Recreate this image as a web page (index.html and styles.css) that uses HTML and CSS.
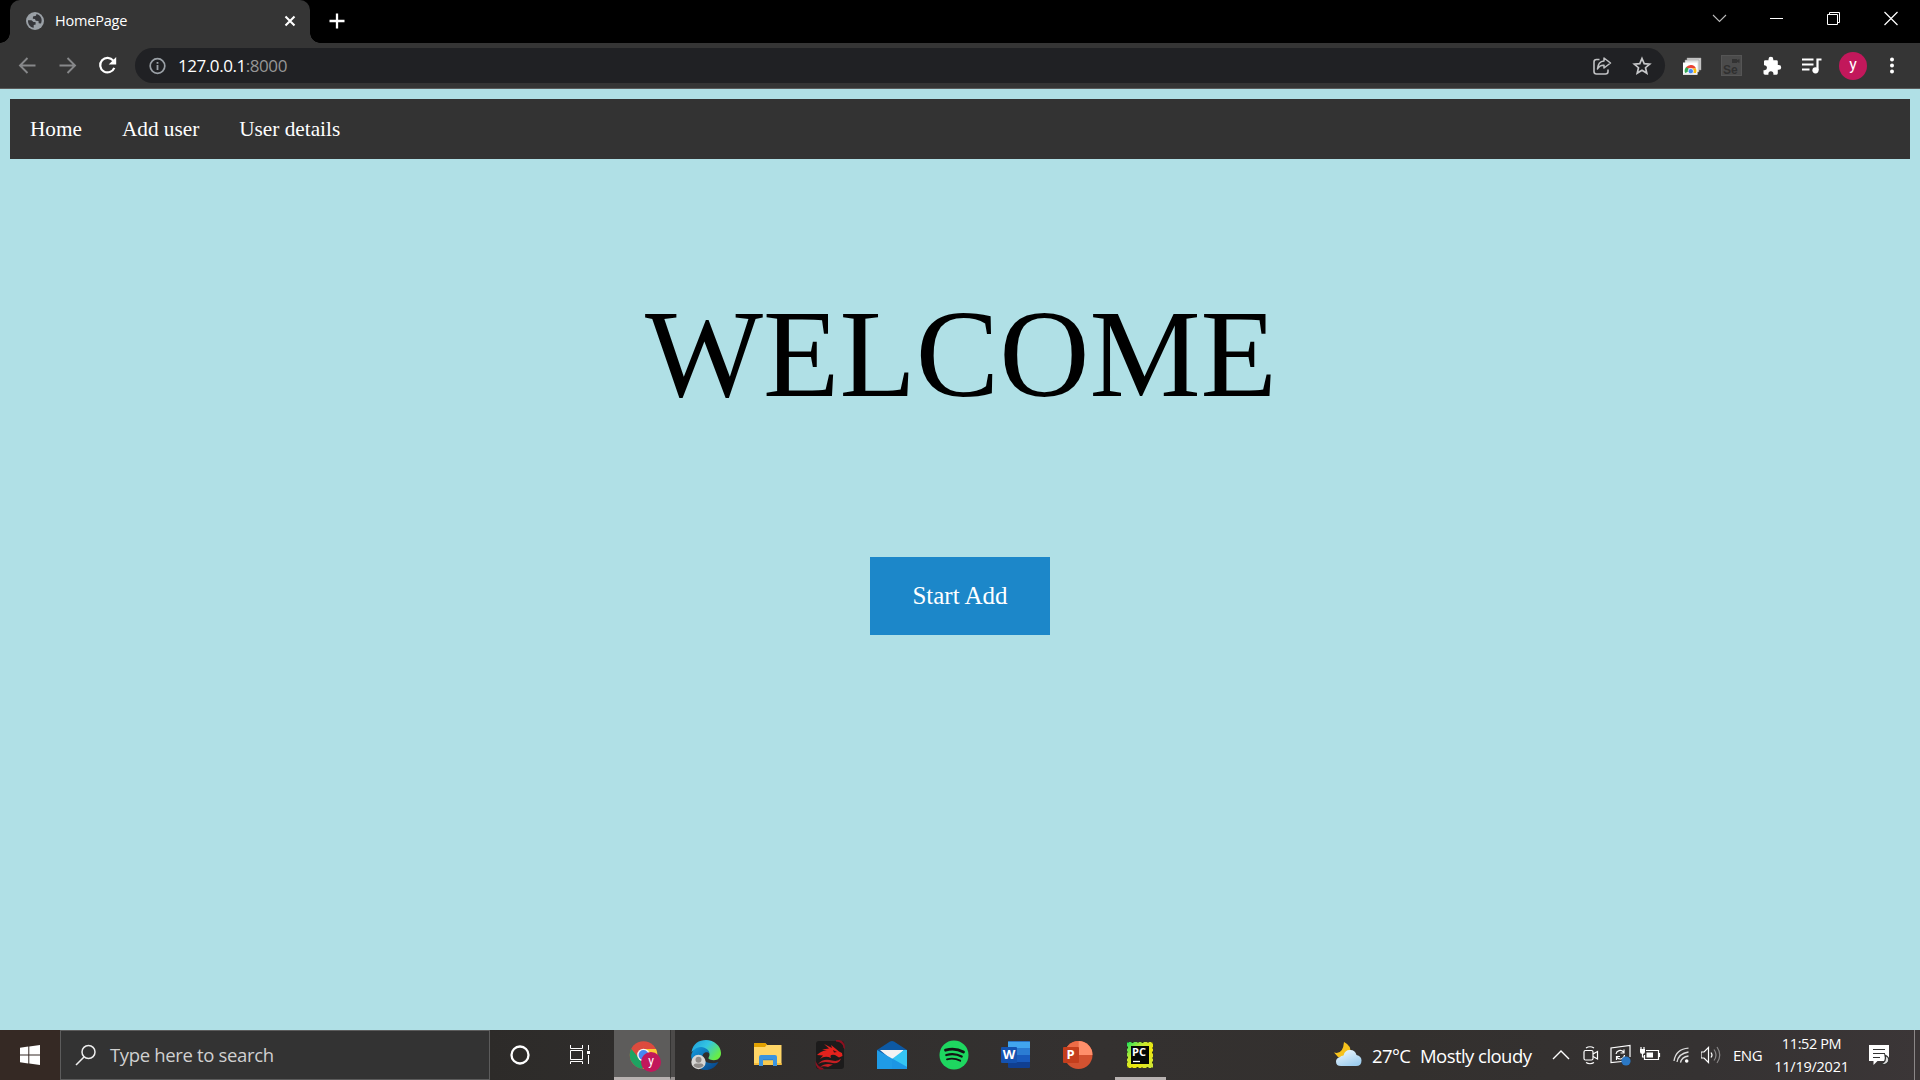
FILE: index.html
```html
<!DOCTYPE html>
<html lang="en">
<head>
<meta charset="utf-8">
<title>HomePage</title>
<link rel="stylesheet" href="styles.css">
</head>
<body>
<div class="screen">
  <header class="tabstrip">
    <div class="tab">
      <svg class="globe" width="18" height="18" viewBox="0 0 18 18"><circle cx="9" cy="9" r="9" fill="#9aa0a6"/><path d="M2 8.200 H5.500 L7.500 10 H9.500 L9.700 12.500 L7.700 13 V15.800 C4 15.500 1.800 12 2 8.200Z M10.500 2 L10 3.800 L7 4.500 L6.800 6.700 L9 7 L9.700 8.700 L12.500 9 L12.700 11.200 L15 11.400 C17 7 14.500 3 10.500 2Z" fill="#35363a"/></svg>
      <span class="tab-title">HomePage</span>
      <svg class="tab-close" width="12" height="12" viewBox="0 0 12 12"><path d="M1.500 1.500 L10.500 10.500 M10.500 1.500 L1.500 10.500" stroke="#fff" stroke-width="2.100"/></svg>
    </div>
    <svg class="new-tab" width="16" height="16" viewBox="0 0 16 16"><path d="M8 .5 V15.500 M.5 8 H15.500" stroke="#fff" stroke-width="2.300"/></svg>
    <div class="window-buttons">
      <svg width="57" height="30" viewBox="0 0 57 30"><path d="M22 15 L28.500 21.500 L35 15" fill="none" stroke="#bbb" stroke-width="1.100"/></svg>
      <svg width="57" height="30" viewBox="0 0 57 30"><path d="M22 18.500 H35" stroke="#fff"/></svg>
      <svg width="57" height="30" viewBox="0 0 57 30"><path d="M22.500 14.500 H32.500 V24.500 H22.500Z M24.500 14.500 V12.500 H34.500 V22.500 H32.500" fill="none" stroke="#fff"/></svg>
      <svg width="58" height="30" viewBox="0 0 58 30"><path d="M22.500 12 L35.500 25 M35.500 12 L22.500 25" stroke="#fff" stroke-width="1.200"/></svg>
    </div>
  </header>

  <div class="toolbar">
    <svg class="nav-icon" width="20" height="20" viewBox="0 0 20 20"><path d="M18.500 9.500 H3.500 M10.500 2 L3 9.500 L10.500 17" fill="none" stroke="#87888a" stroke-width="1.900"/></svg>
    <svg class="nav-icon" width="20" height="20" viewBox="0 0 20 20"><path d="M2.500 9.500 H17.500 M10.500 2 L18 9.500 L10.500 17" fill="none" stroke="#87888a" stroke-width="1.900"/></svg>
    <svg class="nav-icon" width="20" height="20" viewBox="0 0 20 20"><path d="M16.300 4.700 A7.300 7.300 0 1 0 17.300 11.800" fill="none" stroke="#fff" stroke-width="2.200"/><path d="M19.200 1 V8.500 H11.700Z" fill="#fff"/></svg>
    <div class="omnibox">
      <svg class="info" width="18" height="18" viewBox="0 0 18 18"><circle cx="9.500" cy="9" r="7.300" fill="none" stroke="#9aa0a6" stroke-width="1.700"/><path d="M9.500 8 V13 M9.500 5 V6.700" stroke="#9aa0a6" stroke-width="1.800"/></svg>
      <span class="url">127.0.0.1<span class="port">:8000</span></span>
      <svg class="share" width="20" height="20" viewBox="0 0 20 20"><path d="M7.500 3.500 H4.500 Q2 3.500 2 6 V15.500 Q2 18 4.500 18 H13.500 Q16 18 16 15.500 V13.500" fill="none" stroke="#c0c1c3" stroke-width="1.600"/><path d="M12 2 L18.500 7 L12 12 V9.200 Q7.500 9 5.500 13 Q6 5.500 12 5Z" fill="none" stroke="#c0c1c3" stroke-width="1.500" stroke-linejoin="round"/></svg>
      <svg class="star" width="20" height="20" viewBox="0 0 20 20"><path d="M10 2.500 L12.200 7.600 L17.700 8.100 L13.500 11.700 L14.800 17.100 L10 14.200 L5.200 17.100 L6.500 11.700 L2.300 8.100 L7.800 7.600Z" fill="none" stroke="#c6c7c9" stroke-width="1.700"/></svg>
    </div>
    <div class="extensions">
      <svg width="20" height="20" viewBox="0 0 20 20"><path d="M5 2 H19 V14 H5Z" fill="#d0d0d0" stroke="#999" stroke-width=".5"/><path d="M3 4 H17 V16 H3Z" fill="#e2e2e2" stroke="#888" stroke-width=".5"/><path d="M1 6.500 H15.500 V18 H1Z" fill="#fff"/><path d="M3 17 A5.700 5.700 0 0 1 5 10.500 L8.500 15Z" fill="#34a853"/><path d="M4 11.500 A5.700 5.700 0 0 1 14 12.500 H8Z" fill="#ea4335"/><path d="M9 12.500 H14 Q15 15 14 17 H9Z" fill="#fbbc05"/><circle cx="8.800" cy="15.200" r="2.700" fill="#4285f4" stroke="#fff" stroke-width=".8"/><path d="M1 17.500 H15.500 V19 H1Z" fill="#ddd"/></svg>
      <svg width="22" height="22" viewBox="0 0 22 22"><rect x=".5" y=".5" width="20" height="20" fill="#4b4b4b" stroke="#555"/><path d="M11 4 H16 V5 L18.500 4 V8 L16 7 V8 H11Z" fill="#333"/><text x="2" y="18.500" class="se-label">Se</text></svg>
      <svg width="20" height="20" viewBox="0 0 20 20"><path d="M2 5.500 Q2 4.300 3.200 4.300 H6.500 V3.200 A2.400 2.400 0 0 1 11.300 3.200 V4.300 H14.500 Q15.800 4.300 15.800 5.500 V9 H16.800 A2.300 2.300 0 0 1 16.800 13.800 H15.800 V17.300 Q15.800 18.700 14.500 18.700 H11.400 V17.700 A2.500 2.500 0 0 0 6.400 17.700 V18.700 H3 Q1.500 18.700 1.500 17.300 V14.200 H2.500 A2.500 2.500 0 0 0 2.500 9.200 H2Z" fill="#fff"/></svg>
      <svg width="22" height="20" viewBox="0 0 22 20"><path d="M1 3.500 H12.500 M1 8.500 H12.500 M1 13.500 H8.500" stroke="#fff" stroke-width="2"/><path d="M16.500 14 V3.500 H20.500" fill="none" stroke="#fff" stroke-width="2.200"/><circle cx="14.500" cy="14.300" r="3.100" fill="#fff"/></svg>
      <span class="avatar">y</span>
      <svg width="6" height="18" viewBox="0 0 6 18"><g fill="#fff"><circle cx="4" cy="2.500" r="2"/><circle cx="4" cy="8.500" r="2"/><circle cx="4" cy="14.500" r="2"/></g></svg>
    </div>
  </div>

  <main class="page">
    <nav class="navbar"><a>Home</a><a>Add user</a><a>User details</a></nav>
    <h1 class="welcome">WELCOME</h1>
    <a class="start">Start Add</a>
  </main>

  <footer class="taskbar">
    <div class="cell start-menu"><svg width="20" height="20" viewBox="0 0 20 20"><path d="M0 2.700 L8.300 1.500 V9.400 H0Z M9.300 1.400 L20 0 V9.400 H9.300Z M0 10.400 H8.300 V18.500 L0 17.300Z M9.300 10.400 H20 V20 L9.300 18.600Z" fill="#fff"/></svg></div>
    <div class="search">
      <svg width="22" height="22" viewBox="0 0 22 22"><circle cx="13.500" cy="8" r="6.500" fill="none" stroke="#eee" stroke-width="1.500"/><path d="M9 13 L1 21" stroke="#eee" stroke-width="1.600"/></svg>
      <span>Type here to search</span>
    </div>
    <div class="cell"><svg width="20" height="20" viewBox="0 0 20 20"><circle cx="10" cy="10" r="8.500" fill="none" stroke="#fff" stroke-width="2.300"/></svg></div>
    <div class="cell task-view"><svg width="20" height="20" viewBox="0 0 20 20"><path d="M.5 0 V3.500 H12.500 V0 M.5 5.500 H12.500 V14.500 H.5Z M.5 19 V16.500 H12.500 V19 M18.500 0 V5 M18.500 10 V19" fill="none" stroke="#fff"/><rect x="17" y="6" width="3" height="3" fill="#fff"/></svg></div>
    <div class="chrome-app"><div class="chrome-active">
      <svg width="32" height="32" viewBox="0 0 32 32"><circle cx="14.500" cy="15" r="13.800" fill="#dd4b3e"/><path d="M2.200 8.800 A13.800 13.800 0 0 0 13 28.700 L19 18 L9 17Z" fill="#1da362"/><path d="M14.500 9 H27 A13.800 13.800 0 0 1 14 28.800 L21 15Z" fill="#fcc934"/><circle cx="14.500" cy="15" r="6.300" fill="#f5f5f5"/><circle cx="14.500" cy="15" r="4.900" fill="#4688f1"/><circle cx="22" cy="22" r="10" fill="#c2185b"/><text x="22" y="25" class="badge-y">y</text></svg>
    </div><div class="chrome-stack"></div></div>
    <div class="app"><svg width="32" height="32" viewBox="0 0 32 32">
      <defs><linearGradient id="edge-top" x1="0" y1="0" x2="1" y2=".6"><stop offset="0" stop-color="#1d9cdc"/><stop offset=".5" stop-color="#34c5e2"/><stop offset="1" stop-color="#68ed45"/></linearGradient><linearGradient id="edge-low" x1="0" y1="0" x2="1" y2="1"><stop stop-color="#139cdf"/><stop offset="1" stop-color="#073f83"/></linearGradient></defs>
      <path d="M1.500 13 C3 4.500 9 1 16 1 C24 1 31 7 31 14 C31 20 26 22.500 20 20.500 C17 19.500 19.500 18 19.500 15.500 C19 10 11 6 1.500 13Z" fill="url(#edge-top)"/>
      <path d="M1.200 18 C1 12 6 8 11 8 C16 8 19.500 12 19.500 14.500 C17 11.500 12 14 12.500 18 C13 23 20 26 28.500 23 C25 29 20 31 16 31 C8 31 2 25 1.200 18Z" fill="url(#edge-low)"/>
      <circle cx="8.500" cy="23" r="7.200" fill="#d8d7d5"/><circle cx="8.500" cy="20.800" r="3" fill="#8f8b88"/><path d="M3.500 27 Q3.500 24.500 6 24.500 H11 Q13.500 24.500 13.500 27 Q8.500 31 3.500 27Z" fill="#8f8b88"/></svg></div>
    <div class="app"><svg width="30" height="30" viewBox="0 0 30 30"><path d="M1 5 Q1 3 2 3 H12 L14 5 H28.500 V25 H1Z" fill="#ffd667"/><path d="M1 4 Q1 3 2 3 H12 L14 4.500 L12 7 H1Z" fill="#e2a100"/><path d="M1 23 H28.500 V25 H1Z" fill="#f6bd3b"/><path d="M6 26 V17 Q6 15 8 15 H22 Q24 15 24 17 V26 H20 V20 H10 V26Z" fill="#3b94df"/><path d="M10 19.500 H20 V20.500 H10Z" fill="#2776bd"/><path d="M10 20.500 H20 V25 H10Z" fill="#f8c94f"/></svg></div>
    <div class="app"><svg width="30" height="30" viewBox="0 0 30 30"><path d="M20 1 H26 Q30 1 29.500 8 L24 9Z M1 21 L9 28 L6 30 Q0 29 1 21Z" fill="#780c1c"/><rect x="1" y="1" width="28" height="28" rx="3" fill="#1c1b1b"/><path d="M21 0 Q30 -1 30 9 L28.500 8 Q28 2 21 1.500Z M.5 21 Q0 30 9 29.500 L8 28 Q3 27 .5 21Z" fill="#8e1120"/><path d="M2 15 Q7 10 12 10.500 L7 9.500 L14 8.500 L9 4 L17 8 L16 5 L21 9 L24 11.500 L27 13 L27.500 16 L24 17.500 L20 15 Q14 14 16 18 Q10 15 5 19 L8 15.500Z" fill="#e3221d"/><path d="M3 24 Q8 18 17 20.500 Q23 22 26 18.500 Q24 25 15 22.500 Q8 21 3 24Z M5 27 Q10 22.500 18 24.500 L13 27 Q9 25.500 5 27Z" fill="#c51f22"/><path d="M18 10 L22 12 L19 12.500Z" fill="#3c1010"/></svg></div>
    <div class="app"><svg width="30" height="30" viewBox="0 0 30 30"><path d="M0 10 L13 1.500 Q15 .5 17 1.500 L30 10 L15 21Z" fill="#0c59a4"/><path d="M3 10 H27 L16 21Z" fill="#f3f3f3"/><path d="M15 19 L27 10 H30 V29 H27Z" fill="#35c5f3"/><path d="M0 10 L30 27 V29 H0Z" fill="#1f9be6"/><path d="M15 18.500 L30 27 V29 H15Z" fill="#168de0" opacity=".35"/></svg></div>
    <div class="app"><svg width="30" height="30" viewBox="0 0 30 30"><circle cx="15" cy="15" r="14.500" fill="#1ed760"/><g fill="none" stroke="#131313" stroke-linecap="round"><path d="M6.500 10.200 Q16 7.500 24.500 12" stroke-width="2.800"/><path d="M7.300 15 Q15.500 12.700 22.700 16.500" stroke-width="2.300"/><path d="M8 19.300 Q15 17.500 21.200 20.700" stroke-width="1.900"/></g></svg></div>
    <div class="app"><svg width="30" height="30" viewBox="0 0 30 30"><rect x="7" y="1" width="22" height="27" rx="1" fill="#103f91"/><path d="M7 1.500 H29 V8 H7Z" fill="#41a5ee"/><path d="M7 8 H29 V15 H7Z" fill="#2b7cd3"/><path d="M7 15 H29 V22 H7Z" fill="#185abd"/><rect x="0" y="7" width="16" height="16" rx="1" fill="#1452b0"/><text x="8" y="19.300" class="office">W</text></svg></div>
    <div class="app"><svg width="30" height="30" viewBox="0 0 30 30"><circle cx="15.500" cy="15" r="14" fill="#d35230"/><path d="M15.500 1 V15 H1.500 A14 14 0 0 1 15.500 1Z" fill="#ed6c47"/><path d="M15.500 1 A14 14 0 0 1 29.500 15 H15.500Z" fill="#ff8f6b"/><rect x="0" y="7" width="16" height="16" rx="1" fill="#c43e1c"/><text x="7.500" y="19.300" class="office">P</text></svg></div>
    <div class="app running"><svg width="28" height="28" viewBox="0 0 28 28"><defs><linearGradient id="py" x2="1" y2="1"><stop stop-color="#19e25d"/><stop offset=".35" stop-color="#c6e932"/><stop offset=".6" stop-color="#f0e70d"/><stop offset="1" stop-color="#c9e43d"/></linearGradient></defs><rect x="1" y="1" width="26" height="26" fill="url(#py)"/><rect x="1.500" y="1.500" width="25" height="25" fill="none" stroke="#151708" stroke-dasharray="1 3 2 4" opacity=".85"/><rect x="5" y="5" width="18" height="18" fill="#050805"/><text x="6" y="14.500" class="pc">PC</text><path d="M7 20.500 H14" stroke="#fff" stroke-width="1.300"/></svg></div>

    <div class="tray">
      <svg class="weather" width="30" height="28" viewBox="0 0 30 28"><defs><linearGradient id="cloud" x2=".6" y2="1"><stop stop-color="#f5fbff"/><stop offset="1" stop-color="#9fceef"/></linearGradient></defs><path d="M11 1 Q19 5 17 12 Q13 19 5 16 L1 11.500 Q10 14 11 1Z" fill="#f6c21c"/><path d="M8 25 Q3 25 3 20.500 Q3 17 7 16 Q8 14.500 10.500 14.500 Q12 8.500 17.500 9 Q22 9 23.500 14 Q28.500 15 28.500 19.500 Q28.500 25 23 25Z" fill="url(#cloud)"/></svg>
      <span class="temp">27°C</span><span class="cond">Mostly cloudy</span>
      <svg class="t-up" width="18" height="10" viewBox="0 0 18 10"><path d="M1 9 L9 1 L17 9" fill="none" stroke="#fff" stroke-width="1.400"/></svg>
      <svg class="t-cam" width="16" height="20" viewBox="0 0 16 20"><g fill="none" stroke="#fff" stroke-width="1.200"><rect x="1" y="5.500" width="9" height="9.500" rx="1.500"/><path d="M10 9 L14.500 6.500 V14 L10 11.500 M3 3 Q7 .5 11 3 M3 17.500 Q7 20 11 17.500"/></g></svg>
      <svg class="t-sync" width="22" height="22" viewBox="0 0 22 22"><g fill="none" stroke="#fff" stroke-width="1.200"><path d="M12 17.500 L1 18.500 V4 L20 1.500 V13"/><path d="M6 10 A4.300 4.300 0 0 1 13.500 8 M14 5.500 V9 H10.500 M14.500 11 A4.300 4.300 0 0 1 7 13.500 M6.500 16 V12.500 H10"/></g><circle cx="16" cy="17" r="4.600" fill="#2b78c5"/></svg>
      <svg class="t-bat" width="22" height="16" viewBox="0 0 22 16"><path d="M6 3.500 H18.500 V12.500 H4.500 V8 M19.500 6 V10" fill="none" stroke="#fff" stroke-width="1.200"/><path d="M6.500 5.500 H13 V10.500 H6.500Z M0 2 H5 V5 Q5 7 2.500 7 Q0 7 0 5Z" fill="#fff"/><path d="M1 0 V3 M4 0 V3 M2.500 6 V10 H4.500" fill="none" stroke="#fff" stroke-width="1.200"/></svg>
      <svg class="t-wifi" width="17" height="17" viewBox="0 0 17 17"><g fill="none" stroke="#ddd" stroke-width="1.300"><path d="M1 14 Q3 2 15.500 1.200 M4 15 Q5.500 6.500 15.500 5 M7.500 15.700 Q8.500 10 15.500 9"/></g><circle cx="13.700" cy="14" r="1.800" fill="#fff"/></svg>
      <svg class="t-vol" width="22" height="20" viewBox="0 0 22 20"><path d="M0 7 H3 L7.500 2.500 V17.500 L3 13 H0Z" fill="none" stroke="#fff" stroke-width="1.200"/><path d="M10 7.500 Q12 10 10 12.500" fill="none" stroke="#fff" stroke-width="1.200"/><path d="M13 4.500 Q17 10 13 15.500 M16 2 Q21.500 10 16 18" fill="none" stroke="#8a8888" stroke-width="1.200"/></svg>
      <span class="lang">ENG</span>
      <div class="clock"><span class="time">11:52 PM</span><span class="date">11/19/2021</span></div>
      <svg class="t-note" width="22" height="22" viewBox="0 0 22 22"><path d="M0 1 H20 V17 H8.500 L4.500 21 V17 H0Z" fill="#fff"/><path d="M4 5.500 H16 M4 9.500 H16 M4 13.500 H11" stroke="#333" stroke-width="1.200"/><path d="M16 11 Q21 13.500 19.500 17.500 Q16.500 22.500 12 19.500 Q18 18 16 11Z" fill="#ddd" stroke="#333" stroke-width="1.300"/></svg>
      <div class="show-desktop"></div>
    </div>
  </footer>
</div>
</body>
</html>
```
FILE: styles.css
```css
* { box-sizing: border-box; }
body { margin: 0; background: #b0e0e6; }
svg { display: block; flex: none; }
.screen {
  width: 1920px; height: 1080px; overflow: hidden;
  display: flex; flex-direction: column;
  font-family: "Open Sans", "Noto Sans", sans-serif;
}

/* browser tab strip */
.tabstrip { height: 43px; flex: none; background: #000; display: flex; padding-left: 10px; }
.tab {
  position: relative; width: 300px; height: 43px; flex: none;
  background: #353535; border-radius: 10px 10px 0 0;
  display: flex; align-items: center; padding: 0 9px 1px 16px;
}
.tab::before, .tab::after { content: ""; position: absolute; bottom: 0; width: 10px; height: 10px; }
.tab::before { left: -10px; background: radial-gradient(circle at 0 0, transparent 9.500px, #353535 10px); }
.tab::after { right: -10px; background: radial-gradient(circle at 100% 0, transparent 9.500px, #353535 10px); }
.tab-title { margin-left: 11px; padding-bottom: 2px; color: #fff; font-size: 14.500px; letter-spacing: -.2px; white-space: nowrap; }
.tab-close { margin-left: auto; margin-right: 5px; }
.new-tab { margin: 13px 0 0 19px; }
.window-buttons { margin-left: auto; display: flex; }

/* browser toolbar */
.toolbar {
  height: 46px; flex: none; background: #353535; border-bottom: 1px solid #5b5b5b;
  display: flex; align-items: center; padding: 0 24px 0 17px;
}
.nav-icon { margin-right: 20px; }
.omnibox {
  width: 1530px; height: 35px; margin-left: -2px; border-radius: 18px; background: #202124;
  display: flex; align-items: center; padding: 0 13px 0 13px;
}
.url { margin-left: 12px; padding-bottom: 1px; color: #fff; font-size: 17px; letter-spacing: -.44px; }
.port { color: #969696; }
.share { margin-left: auto; margin-right: 20px; }
.extensions { margin-left: 17px; display: flex; align-items: center; gap: 19px; flex: 1; }
.avatar {
  width: 28px; height: 28px; border-radius: 50%; background: #c2185b; color: #fff;
  font: 16px/26px Roboto, sans-serif; text-align: center; margin: 0 2px 0 -3px;
}
.se-label { font: bold 12px "Liberation Sans", sans-serif; fill: #303030; }

/* web page */
.page {
  flex: 1; background: #b0e0e6; padding: 10px; display: flex; flex-direction: column; align-items: center;
  font-family: "Liberation Serif", serif;
}
.navbar { align-self: stretch; height: 60px; background: #333; display: flex; }
.navbar a { padding: 18px 20px; color: #fff; font-size: 21.250px; line-height: 25px; }
.welcome { margin: 123px 0 0; padding-left: 2px; font-size: 125px; line-height: 144px; font-weight: 400; }
.start {
  margin-top: 131px; width: 180px; height: 78px; background: #1c87c9; color: #fff;
  font-size: 25px; line-height: 78px; text-align: center;
}

/* desktop taskbar */
.taskbar {
  height: 50px; flex: none; display: flex; color: #fff;
  background: linear-gradient(90deg, #352924 0, #352924 60px, #2d2b29 490px, #302e2d 680px, #343130 1100px, #33302e 1400px, #353232 1700px, #3b3637 100%);
}
.cell { width: 60px; display: flex; align-items: center; justify-content: center; }
.task-view { margin-right: 4px; }
.search {
  width: 430px; background: #333; border: 1px solid #5c5c5c;
  display: flex; align-items: center; padding-left: 14px; color: #d0d0d0; font-size: 18.500px;
}
.search span { margin-left: 13px; letter-spacing: -.34px; padding-bottom: 1px; }
.chrome-app { width: 61px; display: flex; }
.chrome-active {
  width: 56px; background: #5d5c5b; border-bottom: 3px solid #b8b2b1;
  display: flex; padding: 10px 0 0 15px;
}
.chrome-stack { width: 5px; background: #4c4a49; border-left: 1px solid #353433; border-bottom: 3px solid #989392; }
.badge-y { font: 12px Roboto, sans-serif; fill: #fff; text-anchor: middle; }
.office { font: bold 13px "Open Sans", sans-serif; fill: #fff; text-anchor: middle; }
.pc { font: bold 11px "Open Sans", sans-serif; fill: #fff; }
.app { width: 62px; display: flex; align-items: center; justify-content: center; }
.running { background: linear-gradient(#b8b2b1, #b8b2b1) 6px 47px / 51px 3px no-repeat; }
.tray { margin-left: auto; display: flex; align-items: center; white-space: nowrap; }
.weather { margin-right: 9px; }
.temp, .cond { font-size: 18.500px; padding-top: 1px; }
.temp { width: 48px; letter-spacing: -.6px; }
.cond { width: 132px; letter-spacing: -.55px; }
.t-up { margin-right: 13px; }
.t-cam { margin-right: 11px; }
.t-sync { margin-right: 8px; }
.t-bat { margin-right: 11px; }
.t-wifi { margin-right: 11px; }
.t-vol { margin-right: 10px; }
.lang { width: 41px; font-size: 15px; letter-spacing: -.5px; }
.clock {
  width: 75px; height: 50px; display: flex; flex-direction: column; align-items: center;
  font-size: 14.500px; line-height: 23px; padding-top: 2px;
}
.time { letter-spacing: -.4px; }
.date { letter-spacing: -.25px; }
.t-note { margin: 0 23px 0 20px; }
.show-desktop { width: 6px; height: 50px; border-left: 1px solid #8b8787; }
```
